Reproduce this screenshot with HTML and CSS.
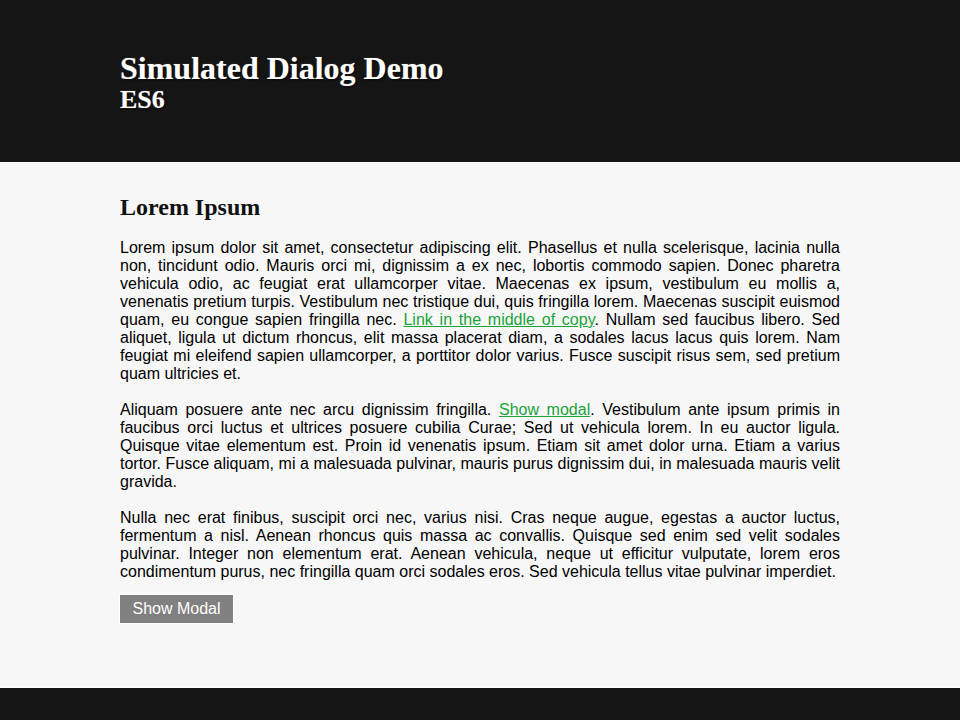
FILE: index.html
```html
<!DOCTYPE html>
<html>
<head>
<meta charset="utf-8">
<title>Simulated Dialog Demo</title>
<link rel="stylesheet" href="styles.css">
</head>
<body>
<header class="masthead">
  <div class="wrap">
    <h1 class="title">Simulated Dialog Demo</h1>
    <h2 class="subtitle">ES6</h2>
  </div>
</header>
<main class="content">
  <div class="wrap">
    <h2 class="section-title">Lorem Ipsum</h2>
    <p>Lorem ipsum dolor sit amet, consectetur adipiscing elit. Phasellus et nulla scelerisque, lacinia nulla non, tincidunt odio. Mauris orci mi, dignissim a ex nec, lobortis commodo sapien. Donec pharetra vehicula odio, ac feugiat erat ullamcorper vitae. Maecenas ex ipsum, vestibulum eu mollis a, venenatis pretium turpis. Vestibulum nec tristique dui, quis fringilla lorem. Maecenas suscipit euismod quam, eu congue sapien fringilla nec. <a href="#">Link in the middle of copy</a>. Nullam sed faucibus libero. Sed aliquet, ligula ut dictum rhoncus, elit massa placerat diam, a sodales lacus lacus quis lorem. Nam feugiat mi eleifend sapien ullamcorper, a porttitor dolor varius. Fusce suscipit risus sem, sed pretium quam ultricies et.</p>
    <p>Aliquam posuere ante nec arcu dignissim fringilla. <a href="#">Show modal</a>. Vestibulum ante ipsum primis in faucibus orci luctus et ultrices posuere cubilia Curae; Sed ut vehicula lorem. In eu auctor ligula. Quisque vitae elementum est. Proin id venenatis ipsum. Etiam sit amet dolor urna. Etiam a varius tortor. Fusce aliquam, mi a malesuada pulvinar, mauris purus dignissim dui, in malesuada mauris velit gravida.</p>
    <p class="last">Nulla nec erat finibus, suscipit orci nec, varius nisi. Cras neque augue, egestas a auctor luctus, fermentum a nisl. Aenean rhoncus quis massa ac convallis. Quisque sed enim sed velit sodales pulvinar. Integer non elementum erat. Aenean vehicula, neque ut efficitur vulputate, lorem eros condimentum purus, nec fringilla quam orci sodales eros. Sed vehicula tellus vitae pulvinar imperdiet.</p>
    <button class="btn" type="button">Show Modal</button>
  </div>
</main>
<footer class="footer"></footer>
</body>
</html>
```
FILE: styles.css
```css
html, body {
  margin: 0;
  padding: 0;
}
body {
  background: #151515;
  font-family: "Liberation Sans", Arial, sans-serif;
  font-size: 16px;
  line-height: 18px;
  color: #000;
}
.wrap {
  width: 720px;
  margin: 0 auto;
}
.masthead {
  background: #151515;
  height: 163px;
  border-bottom: 1px solid #fff;
  box-sizing: border-box;
  padding-top: 50px;
}
.title {
  margin: 0;
  font-family: "Liberation Serif", "Times New Roman", serif;
  font-weight: bold;
  font-size: 32px;
  line-height: 36px;
  color: #fff;
  text-shadow: 1px 1px 2px rgba(0,0,0,0.9), 0 0 1px #999;
}
.subtitle {
  margin: 0;
  font-family: "Liberation Serif", "Times New Roman", serif;
  font-weight: bold;
  font-size: 26px;
  line-height: 28px;
  color: #fff;
  text-shadow: 1px 1px 2px rgba(0,0,0,0.9), 0 0 1px #999;
}
.content {
  background: #f7f7f7;
  height: 525px;
  border-bottom: 2px solid #fff;
  box-sizing: border-box;
  padding-top: 30px;
}
.section-title {
  margin: 0 0 18px;
  font-family: "Liberation Serif", "Times New Roman", serif;
  font-weight: bold;
  font-size: 24px;
  line-height: 28px;
  color: #111;
}
p {
  margin: 0 0 18px;
  text-align: justify;
}
p.last {
  margin-bottom: 13px;
}
a {
  color: #1aa33a;
  text-decoration: underline;
}
.btn {
  display: block;
  width: 115px;
  height: 30px;
  margin: 0 0 0 -1px;
  background: #808080;
  border: 1px solid #fff;
  color: #fff;
  font-family: "Liberation Sans", Arial, sans-serif;
  font-size: 16px;
  padding: 0;
}
.footer {
  height: 40px;
  background: #151515;
}
```
